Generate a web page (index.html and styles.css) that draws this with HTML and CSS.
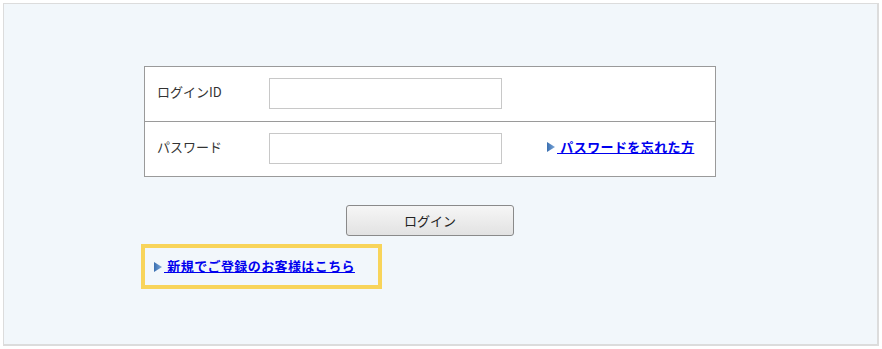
FILE: index.html
```html
<!DOCTYPE html>
<html lang="ja">
<head>
<meta charset="utf-8">
<title>ログイン</title>
<link rel="stylesheet" href="styles.css">
</head>
<body>
<div class="page">
  <div class="panel">
    <div class="form-area">
      <div class="form-box">
        <div class="row">
          <label class="label">ログインID</label>
          <input class="field" type="text">
        </div>
        <div class="row row-split">
          <label class="label">パスワード</label>
          <input class="field" type="password">
          <a class="link forgot" href="#"><svg class="arrow" width="8" height="10" viewBox="0 0 8 10"><defs><linearGradient id="g1" x1="0" y1="0" x2="1" y2="0"><stop offset="0" stop-color="#3a6fb0"/><stop offset="1" stop-color="#7aa6d8"/></linearGradient></defs><polygon points="0,0 8,5 0,10" fill="url(#g1)"/></svg><span class="link-text">&nbsp;パスワードを忘れた方</span></a>
        </div>
      </div>
      <div class="btn-row">
        <button class="btn" type="button">ログイン</button>
      </div>
      <div class="signup">
        <a class="link signup-link" href="#"><svg class="arrow" width="8" height="10" viewBox="0 0 8 10"><defs><linearGradient id="g2" x1="0" y1="0" x2="1" y2="0"><stop offset="0" stop-color="#3a6fb0"/><stop offset="1" stop-color="#7aa6d8"/></linearGradient></defs><polygon points="0,0 8,5 0,10" fill="url(#g2)"/></svg><span class="link-text">&nbsp;新規でご登録のお客様はこちら</span></a>
      </div>
    </div>
  </div>
</div>
</body>
</html>
```

FILE: styles.css
```css
html, body {
  margin: 0;
  padding: 0;
  background: #ffffff;
  font-family: "Noto Sans CJK JP", "Noto Sans", sans-serif;
  font-size: 13px;
  color: #333;
}
.page {
  padding: 3px;
}
.panel {
  box-sizing: border-box;
  height: 343px;
  background: #f2f7fb;
  border: 1px solid #dcdcdc;
  border-right-width: 2px;
  border-bottom-width: 2px;
  padding: 62px 0 0 137px;
}
.form-area {
  width: 578px;
}
.form-box {
  margin-left: 3px;
  width: 572px;
  box-sizing: border-box;
  border: 1px solid #9a9a9a;
  background: #fff;
}
.row {
  height: 54px;
  display: flex;
  align-items: center;
  padding-left: 12px;
}
.row-split {
  border-top: 1px solid #9a9a9a;
}
.label {
  width: 112px;
  color: #333;
  line-height: 1;
  position: relative;
  top: -3px;
}
.field {
  box-sizing: border-box;
  width: 233px;
  height: 31px;
  border: 1px solid #c8c8c8;
  background: #fff;
  margin: -1px 0 0 0;
  padding: 0 4px;
}
.link {
  display: inline-flex;
  align-items: center;
  color: #0000ee;
  font-weight: bold;
  text-decoration: none;
  font-size: 13px;
  letter-spacing: 0.4px;
}
.link-text {
  text-decoration: underline;
  padding-left: 2px;
}
.arrow {
  display: block;
  margin-top: 2px;
}
.forgot {
  margin-left: 45px;
  position: relative;
  top: -3px;
}
.signup-link {
  position: relative;
  top: -1px;
}
.btn-row {
  margin-left: 3px;
  width: 572px;
  display: flex;
  justify-content: center;
  padding-top: 28px;
}
.btn {
  box-sizing: border-box;
  width: 168px;
  height: 31px;
  border: 1px solid #8a8a8a;
  border-radius: 3px;
  background: linear-gradient(#f6f6f6, #e2e2e2);
  font-family: "Noto Sans CJK JP", "Noto Sans", sans-serif;
  font-size: 13px;
  color: #222;
  padding: 0;
}
.signup {
  box-sizing: border-box;
  margin-top: 8px;
  width: 241px;
  height: 45px;
  border: 4px solid #f8d45a;
  display: flex;
  align-items: center;
  padding-left: 9px;
}
```
